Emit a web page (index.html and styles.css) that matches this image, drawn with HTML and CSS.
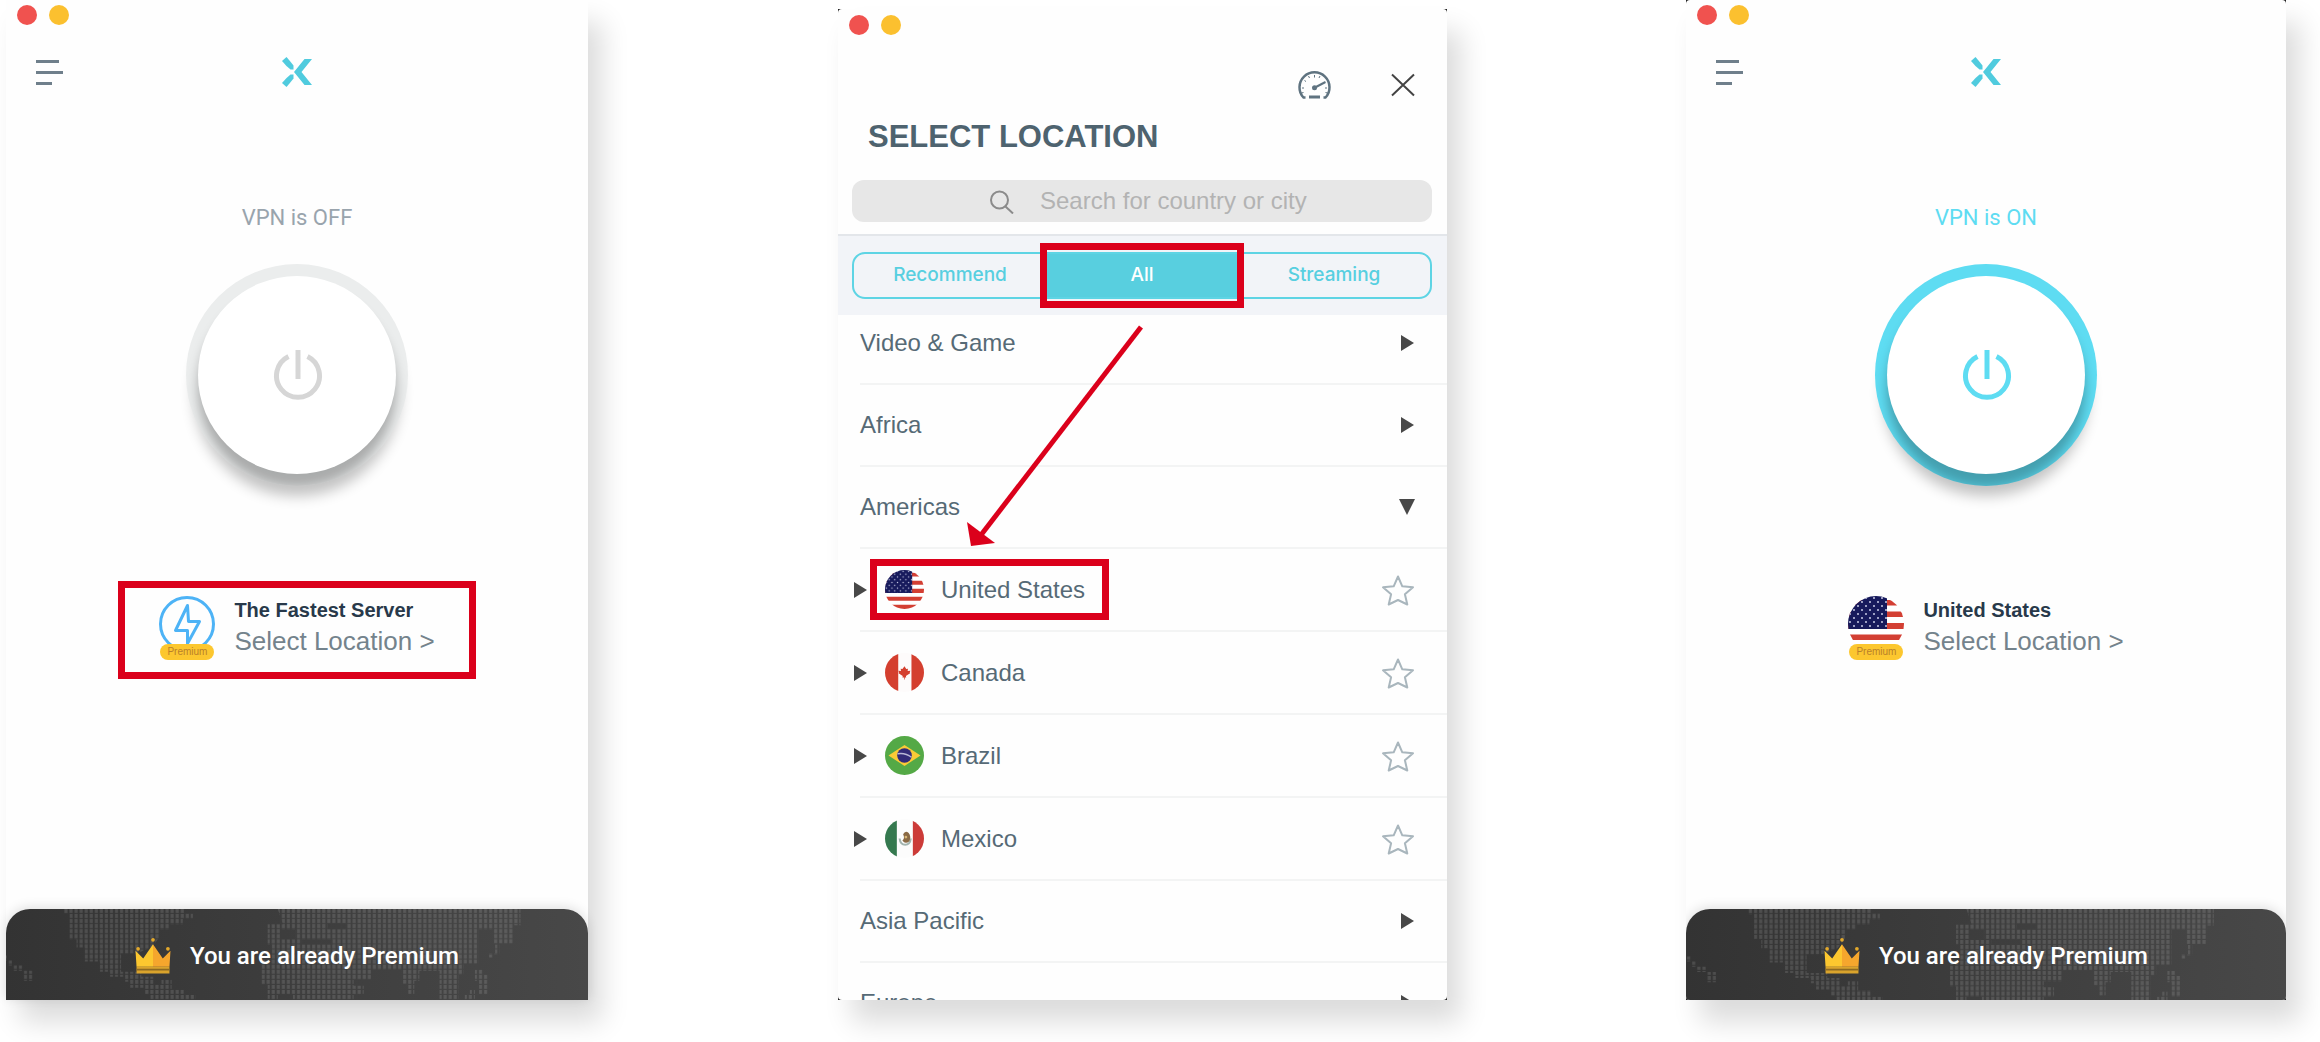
FILE: index.html
```html
<!DOCTYPE html>
<html lang="en">
<head>
<meta charset="utf-8">
<title>VPN – choose a location</title>
<link rel="stylesheet" href="styles.css">
</head>
<body>
<svg class="sprite" aria-hidden="true">
  <defs>
    <pattern id="dots" width="5" height="5" patternUnits="userSpaceOnUse">
      <rect x="1" y="0" width="3" height="4" fill="#fff" fill-opacity=".12"/>
    </pattern>
    <pattern id="stars" width="8" height="8" patternUnits="userSpaceOnUse">
      <circle cx="2" cy="2" r="1" fill="#c9cbe6"/><circle cx="6" cy="6" r="1" fill="#c9cbe6"/>
    </pattern>
    <clipPath id="round"><circle cx="28" cy="28" r="28"/></clipPath>
    <linearGradient id="gold" x1="0" x2="1" y1="0" y2="0">
      <stop offset=".5" stop-color="#fcc72f"/><stop offset=".5" stop-color="#f5a62d"/>
    </linearGradient>
  </defs>
  <symbol id="i-menu" viewBox="0 0 27 27">
    <path d="M0 2.5h23M0 13.5h27M0 24.5h16" stroke="#6f7f8b" stroke-width="3" fill="none"/>
  </symbol>
  <symbol id="i-logo" viewBox="0 0 30 30">
    <g fill="#50cbde">
      <path d="M0 4 4.500 0Q8 4 11.500 8.500V12.500H8.500Q4 9 0 4Z"/>
      <path d="M0 26 4.500 30Q8 26 11.500 21.500V17.500H8.500Q4 21 0 26Z"/>
      <path d="M22.500 2H30L19.500 15 30 28h-7.500L12 15Z"/>
    </g>
  </symbol>
  <symbol id="i-power" viewBox="0 0 50 50">
    <path d="M15.500 6.500a21.500 21.500 0 1 0 19 0M25 0v29" fill="none" stroke="currentColor" stroke-width="5"/>
  </symbol>
  <symbol id="i-bolt" viewBox="0 0 56 56">
    <circle cx="28" cy="28" r="26.500" fill="none" stroke="#4db3f6" stroke-width="3"/>
    <path d="M28.500 9.500 16.500 34.500H28.500V47.500L40.500 25.500H29.500Z" fill="none" stroke="#4db3f6" stroke-width="3" stroke-linejoin="round"/>
  </symbol>
  <symbol id="i-crown" viewBox="0 0 34 35">
    <path d="M0 12.500 7.500 20 17 6l9.500 14L34 12.500 33 28H1Z" fill="url(#gold)"/>
    <path d="M1 28h32v6.500H1z" fill="#d9a32c"/>
    <path d="M1 30h32v1.500H1z" fill="#8d6a22"/>
    <circle cx="17" cy="1.800" r="1.800" fill="#e3a92c"/><circle cx="2.500" cy="10.500" r="1.800" fill="#e3a92c"/><circle cx="31.500" cy="10.500" r="1.800" fill="#e3a92c"/>
  </symbol>
  <symbol id="i-gauge" viewBox="0 0 33 28">
    <g fill="none" stroke="#5f7380">
      <path d="M7.500 26.500H5.500A15 15 0 1 1 27.500 26.500H25.500" stroke-width="2.500"/>
      <path d="M11 26h11" stroke-width="3"/>
      <path d="M4 17h2M29 17h-2M6.500 9.500l1.500 1M10.500 5l1 2M16.500 4v2.500M22 5l-1 2M3.500 22l2-.5M29.500 22l-2-.5" stroke-width="1"/>
      <path d="M17 16.500 27.500 11" stroke-width="2"/>
    </g>
    <circle cx="16.500" cy="16.800" r="2.500" fill="#5f7380"/>
  </symbol>
  <symbol id="i-close" viewBox="0 0 24 24">
    <path d="M1 1.500 23 22.500M23 1.500 1 22.500" stroke="#444" stroke-width="2" fill="none"/>
  </symbol>
  <symbol id="i-search" viewBox="0 0 24 26">
    <circle cx="9.500" cy="12" r="8.500" fill="none" stroke="#8b8b8b" stroke-width="2"/>
    <path d="M15.500 18.500 23 25.500" stroke="#8b8b8b" stroke-width="2"/>
  </symbol>
  <symbol id="i-star" viewBox="0 0 34 32">
    <path d="M17 2.500 21.300 12.300 32 13.300 23.900 20.300 26.300 30.500 17 26 7.700 30.500 10.100 20.300 2 13.300 12.700 12.300Z" fill="none" stroke="#a9b6bd" stroke-width="2" stroke-linejoin="round"/>
  </symbol>
  <symbol id="i-right" viewBox="0 0 16 16"><path d="M2 0 15 8 2 16Z" fill="#484848"/></symbol>
  <symbol id="i-down" viewBox="0 0 16 16"><path d="M0 0h16L8 16Z" fill="#484848"/></symbol>
  <symbol id="f-us" viewBox="0 0 56 56">
    <g clip-path="url(#round)">
      <path d="M0 0h56v56H0z" fill="#fff"/>
      <path d="M0 4h56v5.500H0zM0 15.500h56V21H0zM0 27h56v6H0zM0 38.500h56V44H0zM0 50h56v6H0z" fill="#d33f33"/>
      <path d="M0 0h39v33H0z" fill="#171a5c"/>
      <path d="M0 0h39v33H0z" fill="url(#stars)"/>
    </g>
  </symbol>
  <symbol id="f-ca" viewBox="0 0 56 56">
    <g clip-path="url(#round)">
      <path d="M0 0h56v56H0z" fill="#fdfbfb"/>
      <path d="M0 0h19v56H0zM38 0h18v56H38z" fill="#d43f2f"/>
      <path d="M28 19l2.500 4 2.500-.5-.5 3.500 4-.5-1 2 .5 1.500-6 4 .5 2H28.500v3h-1v-3H25l.5-2-6-4 .5-1.500-1-2 4 .5-.5-3.500 2.500.5Z" fill="#d43f2f"/>
    </g>
  </symbol>
  <symbol id="f-br" viewBox="0 0 56 56">
    <circle cx="28" cy="28" r="28" fill="#54a946"/>
    <path d="M28 13 51 28 28 43 5 28Z" fill="#fbcb36"/>
    <circle cx="28" cy="28" r="10.500" fill="#322a78"/>
    <path d="M18 25.500q11-2 20 5" stroke="#b9b7d6" stroke-width="2" fill="none"/>
  </symbol>
  <symbol id="f-mx" viewBox="0 0 56 56">
    <g clip-path="url(#round)">
      <path d="M0 0h56v56H0z" fill="#fcfcfc"/>
      <path d="M0 0h17v56H0z" fill="#35794f"/>
      <path d="M40 0h16v56H40z" fill="#cc3b38"/>
      <path d="M21 28q1 9 8 9t8-9" stroke="#a3b5b0" stroke-width="3" fill="none"/>
      <path d="M26 22q3-6 8-2 4 5 1 12-6 5-10-1 4-3 1-9Z" fill="#8a6a45"/>
      <circle cx="30" cy="26" r="2" fill="#d8b877"/>
    </g>
  </symbol>
  <symbol id="i-map" viewBox="0 0 582 90" preserveAspectRatio="xMidYMin slice">
    <g fill="url(#dots)">
      <path d="M60 0h120v4h8v6h-10v5h-13v5h-10v8l-8 10-15 6h-15v18h20v5h12v8h8v-5h10v9h12v6h12v5h-45v-6h-6v-6h-14v-6h-5v-5h-15v-5h-10v-10h-15v-14h-8v-8h-7V5H60Z"/>
      <path d="M0 46h5v5h5v5h10v5h-10v-5H5v-5H0zM20 61h10v10H20z"/>
      <path fill-rule="evenodd" d="M272 0h240v16h-7v18h-20v-14h-14v34h-15v11h-5v25h-19V61h-20v10h-5v13h-6v-10h-6V60h-30v10h-18v6h10v9h-10v5h-60v-5h-15v5h-10V75h-6V50h10V35h-4V15h15ZM275 20h14v10h-14zM321 14h19v6h-19zM296 30h30v5h-30z"/>
      <path d="M467 60h8v5h5v20h-9v-14h-4zM457 85h5v-5h5v10h-10zM487 35h4v10h-6v3h-5v-4h7z"/>
    </g>
  </symbol>
</svg>

<main class="stage">
  <section class="panel panel--off" aria-label="VPN off">
    <div class="body">
      <div class="lights"><span class="light light--close"></span><span class="light light--min"></span></div>
      <header class="topbar">
        <button class="plain" aria-label="Menu"><svg width="27" height="27"><use href="#i-menu"/></svg></button>
        <svg width="30" height="30" role="img" aria-label="Logo"><use href="#i-logo"/></svg>
      </header>
      <p class="status">VPN is OFF</p>
      <button class="power" aria-label="Turn VPN on"><span class="knob"><svg width="50" height="50"><use href="#i-power"/></svg></span></button>
      <button class="server server--marked">
        <span class="badge-icon"><svg width="56" height="56"><use href="#i-bolt"/></svg><span class="badge">Premium</span></span>
        <span class="server-text"><strong class="server-name">The Fastest Server</strong><span class="server-pick">Select Location &gt;</span></span>
      </button>
      <footer class="premium">
        <svg class="map" aria-hidden="true"><use href="#i-map"/></svg>
        <svg width="36" height="36" aria-hidden="true"><use href="#i-crown"/></svg>
        <span>You are already Premium</span>
      </footer>
    </div>
  </section>

  <section class="panel panel--framed panel--list" aria-label="Select location">
    <div class="body">
      <div class="lights"><span class="light light--close"></span><span class="light light--min"></span></div>
      <div class="tools">
        <button class="plain" aria-label="Speed test"><svg width="33" height="28"><use href="#i-gauge"/></svg></button>
        <button class="plain" aria-label="Close"><svg width="24" height="24"><use href="#i-close"/></svg></button>
      </div>
      <h1 class="title">SELECT LOCATION</h1>
      <label class="search">
        <svg width="24" height="26" aria-hidden="true"><use href="#i-search"/></svg>
        <input class="search-input" type="text" placeholder="Search for country or city" aria-label="Search for country or city">
      </label>
      <div class="tabs">
        <div class="segments">
          <button class="segment">Recommend</button>
          <button class="segment segment--on">All</button>
          <button class="segment">Streaming</button>
        </div>
      </div>
      <ul class="list">
        <li class="row"><button class="region">Video &amp; Game<svg width="16" height="16"><use href="#i-right"/></svg></button></li>
        <li class="row"><button class="region">Africa<svg width="16" height="16"><use href="#i-right"/></svg></button></li>
        <li class="row"><button class="region">Americas<svg width="16" height="16"><use href="#i-down"/></svg></button></li>
        <li class="row row--country">
          <button class="country country--marked"><svg width="16" height="16"><use href="#i-right"/></svg><svg width="39" height="39"><use href="#f-us"/></svg>United States</button>
          <button class="plain" aria-label="Favourite United States"><svg width="34" height="32"><use href="#i-star"/></svg></button>
        </li>
        <li class="row row--country">
          <button class="country"><svg width="16" height="16"><use href="#i-right"/></svg><svg width="39" height="39"><use href="#f-ca"/></svg>Canada</button>
          <button class="plain" aria-label="Favourite Canada"><svg width="34" height="32"><use href="#i-star"/></svg></button>
        </li>
        <li class="row row--country">
          <button class="country"><svg width="16" height="16"><use href="#i-right"/></svg><svg width="39" height="39"><use href="#f-br"/></svg>Brazil</button>
          <button class="plain" aria-label="Favourite Brazil"><svg width="34" height="32"><use href="#i-star"/></svg></button>
        </li>
        <li class="row row--country">
          <button class="country"><svg width="16" height="16"><use href="#i-right"/></svg><svg width="39" height="39"><use href="#f-mx"/></svg>Mexico</button>
          <button class="plain" aria-label="Favourite Mexico"><svg width="34" height="32"><use href="#i-star"/></svg></button>
        </li>
        <li class="row"><button class="region">Asia Pacific<svg width="16" height="16"><use href="#i-right"/></svg></button></li>
        <li class="row"><button class="region">Europe<svg width="16" height="16"><use href="#i-right"/></svg></button></li>
      </ul>
      <svg class="arrow" viewBox="0 0 180 226" aria-hidden="true">
        <path d="M174 4 14 212" stroke="#db001b" stroke-width="5"/>
        <path d="M0 199 28 220 4 223Z" fill="#db001b"/>
      </svg>
    </div>
  </section>

  <section class="panel panel--framed panel--on" aria-label="VPN on">
    <div class="body">
      <div class="lights"><span class="light light--close"></span><span class="light light--min"></span></div>
      <header class="topbar">
        <button class="plain" aria-label="Menu"><svg width="27" height="27"><use href="#i-menu"/></svg></button>
        <svg width="30" height="30" role="img" aria-label="Logo"><use href="#i-logo"/></svg>
      </header>
      <p class="status status--on">VPN is ON</p>
      <button class="power power--on" aria-label="Turn VPN off"><span class="knob"><svg width="50" height="50"><use href="#i-power"/></svg></span></button>
      <button class="server">
        <span class="badge-icon"><svg width="56" height="56"><use href="#f-us"/></svg><span class="badge">Premium</span></span>
        <span class="server-text"><strong class="server-name">United States</strong><span class="server-pick">Select Location &gt;</span></span>
      </button>
      <footer class="premium">
        <svg class="map" aria-hidden="true"><use href="#i-map"/></svg>
        <svg width="36" height="36" aria-hidden="true"><use href="#i-crown"/></svg>
        <span>You are already Premium</span>
      </footer>
    </div>
  </section>
</main>
</body>
</html>
```
FILE: styles.css
```css
* { box-sizing: border-box; }
body {
  margin: 0;
  background: #fff;
  color: #566a76;
  font-family: "Liberation Sans", Arial, sans-serif;
}
svg { display: block; flex: none; }
button {
  border: 0;
  padding: 0;
  background: none;
  color: inherit;
  font: inherit;
  text-align: left;
}
.sprite { position: absolute; width: 0; height: 0; }

.stage {
  display: grid;
  grid-template-columns: 582fr 250fr 609fr 239fr 600fr;
  min-height: calc(100vh - 42px);
  margin-bottom: 42px;
  padding: 0 34px 0 6px;
}
.panel {
  display: flex;
  min-width: 0;
  box-shadow: 14px 22px 26px rgba(0, 0, 0, .14);
}
.panel--framed { background: #222; }
.panel--off { grid-column: 1; }
.panel--list { grid-column: 3; margin-top: 9px; }
.panel--on { grid-column: 5; }
.body {
  position: relative;
  display: flex;
  flex: 1;
  flex-direction: column;
  min-width: 0;
  padding-top: 5px;
  background: #fefefe;
}
.panel--framed .body { border-radius: 4px; overflow: hidden; }
.panel--list .body { padding-top: 6px; }

.lights { display: flex; gap: 12px; padding-left: 11px; }
.light { width: 20px; height: 20px; border-radius: 50%; }
.light--close { background: #f0524f; }
.light--min { background: #fbc02f; }

.topbar {
  display: grid;
  grid-template-columns: 1fr auto 1fr;
  align-items: center;
  margin-top: 32px;
  padding: 0 30px;
}
.status {
  margin: 116px 0 0;
  color: #99a4ad;
  font: 22px/30px Roboto, sans-serif;
  text-align: center;
}
.status--on { color: #5edcf2; }

.power {
  align-self: center;
  width: 222px;
  height: 222px;
  margin-top: 31px;
  padding: 12px;
  border-radius: 50%;
  background: #ebeded;
  box-shadow: 0 18px 14px -8px rgba(0, 0, 0, .24);
  color: #d6d6d6;
  overflow: hidden;
}
.power--on { background: #5edcf2; color: #5edcf2; }
.knob {
  display: grid;
  place-items: center;
  height: 100%;
  padding-left: 2px;
  border-radius: 50%;
  background: #fff;
  box-shadow: 0 14px 12px rgba(0, 0, 0, .28);
}

.server {
  display: flex;
  align-self: center;
  justify-content: center;
  gap: 19px;
  width: 358px;
  height: 98px;
  margin-top: 95px;
  padding-top: 8px;
  border: 7px solid transparent;
}
.server--marked { border-color: #db001b; }
.badge-icon { position: relative; height: 56px; }
.badge {
  position: absolute;
  left: 1px;
  right: 1px;
  top: 48px;
  border-radius: 8px;
  background: #fcc72f;
  color: #b9802a;
  font-size: 10px;
  line-height: 16px;
  text-align: center;
}
.server-text { display: flex; flex-direction: column; gap: 4px; padding-top: 2px; }
.server-name { color: #28394a; font-size: 20px; line-height: 24px; }
.server-pick { color: #74838c; font-size: 26px; line-height: 30px; }

.premium {
  position: relative;
  display: flex;
  align-items: center;
  justify-content: center;
  gap: 19px;
  height: 91px;
  margin-top: auto;
  padding-top: 3px;
  border-radius: 24px 24px 0 0;
  background: linear-gradient(90deg, #333, #484848);
  box-shadow: 0 -2px 12px rgba(0, 0, 0, .12);
  color: #fff;
  font: 500 24px/32px Roboto, sans-serif;
  overflow: hidden;
}
.map { position: absolute; inset: 0; width: 100%; height: 100%; }
.premium > :not(.map) { position: relative; }

.plain { display: block; }
.tools {
  display: flex;
  align-items: center;
  justify-content: flex-end;
  gap: 60px;
  margin-top: 36px;
  padding-right: 32px;
}
.title {
  margin: 20px 30px 0;
  color: #4e636f;
  font-size: 31px;
  line-height: 36px;
}
.search {
  display: flex;
  align-items: center;
  gap: 26px;
  height: 42px;
  margin: 25px 15px 12px 14px;
  padding-left: 138px;
  border-radius: 12px;
  background: #e7e7e7;
}
.search-input {
  flex: 1;
  min-width: 0;
  padding: 0;
  border: 0;
  background: none;
  font: 24px/30px "Liberation Sans", Arial, sans-serif;
}
.search-input::placeholder { color: #b3b3b3; }

.tabs {
  padding: 16px 15px 16px 14px;
  border-top: 2px solid #e3e6ea;
  background: #f2f4f8;
}
.segments {
  display: grid;
  grid-template-columns: 1fr 1fr 1fr;
  height: 47px;
  border: 2px solid #5ed4e4;
  border-radius: 13px;
}
.segment {
  position: relative;
  padding-bottom: 2px;
  color: #57cfe0;
  font: 500 19px/24px Inter, sans-serif;
  text-align: center;
}
.segment--on { background: #58cfdf; color: #fff; }
.segment--on::after {
  content: "";
  position: absolute;
  inset: -11px -6px;
  border: 7px solid #db001b;
}

/* The list is shown scrolled part-way down, so its first row is cropped. */
.list {
  display: flex;
  flex: 1 1 0;
  flex-direction: column;
  min-height: 0;
  margin: 0;
  padding: 0 0 0 22px;
  list-style: none;
  font-size: 24px;
  line-height: 28px;
  overflow: hidden;
}
.row {
  display: flex;
  flex: none;
  align-items: center;
  height: 82px;
  padding-right: 32px;
  border-bottom: 2px solid #f3f4f4;
}
.row:first-child { margin-top: -12px; }
.row--country { height: 83px; }
.region { display: flex; flex: 1; align-items: center; justify-content: space-between; }
.country {
  position: relative;
  display: flex;
  align-items: center;
  gap: 17px;
  margin-left: -8px;
  margin-right: auto;
}
.country--marked::after {
  content: "";
  position: absolute;
  inset: -11px -24px -11px 18px;
  border: 7px solid #db001b;
}
.arrow {
  position: absolute;
  left: 129px;
  top: 314px;
  width: 180px;
}
```
